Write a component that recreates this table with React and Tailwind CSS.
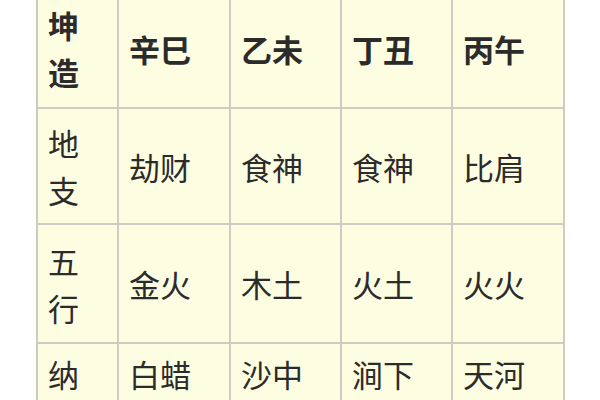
const header = ["辛巳", "乙未", "丁丑", "丙午"];

const rows = [
  { label: ["地", "支"], cells: [["劫财"], ["食神"], ["食神"], ["比肩"]], h: "h-[116px]", top: false },
  { label: ["五", "行"], cells: [["金火"], ["木土"], ["火土"], ["火火"]], h: "h-[119px]", top: false },
  {
    label: ["纳", "音"],
    cells: [["白蜡", "金"], ["沙中", "金"], ["涧下", "水"], ["天河", "水"]],
    h: "h-[120px]",
    top: true,
  },
];

const base = "border-2 border-[#cdcbc2] bg-[#fdfde1] px-[10px]";

export default function App() {
  return (
    <div
      className="w-[600px] h-[400px] overflow-hidden bg-white text-[#2b2b2b]"
      style={{ fontFamily: '"Noto Sans CJK SC", "Noto Sans", sans-serif' }}
    >
      <table className="ml-[36px] -mt-[13px] table-fixed border-collapse text-[31px] leading-[47px]">
        <colgroup>
          <col className="w-[81px]" />
          <col className="w-[112px]" />
          <col className="w-[111px]" />
          <col className="w-[111px]" />
          <col className="w-[112px]" />
        </colgroup>
        <tbody>
          <tr className="h-[120px]">
            <td className={base + " align-middle font-semibold"}>
              <div>坤</div>
              <div>造</div>
            </td>
            {header.map((t) => (
              <td key={t} className={base + " align-middle font-semibold"}>
                {t}
              </td>
            ))}
          </tr>
          {rows.map((r) => {
            const cls = base + (r.top ? " align-top pt-[6px]" : " align-middle");
            return (
              <tr key={r.label[0]} className={r.h}>
                <td className={cls}>
                  <div>{r.label[0]}</div>
                  <div>{r.label[1]}</div>
                </td>
                {r.cells.map((lines, i) => (
                  <td key={i} className={cls}>
                    {lines.map((l) => (
                      <div key={l}>{l}</div>
                    ))}
                  </td>
                ))}
              </tr>
            );
          })}
        </tbody>
      </table>
    </div>
  );
}
